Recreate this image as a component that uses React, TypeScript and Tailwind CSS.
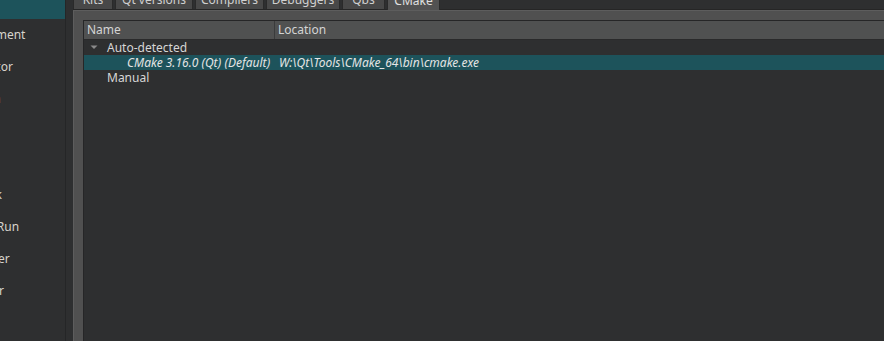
import React from "react";

const sideItems = [
  "Kits",
  "Environment",
  "Text Editor",
  "FakeVim",
  "Help",
  "C++",
  "Qt Quick",
  "Build & Run",
  "Debugger",
  "Designer",
];

const tabs = [
  { label: "Kits", w: "w-[40px]" },
  { label: "Qt versions", w: "w-[78px]" },
  { label: "Compilers", w: "w-[69px]" },
  { label: "Debuggers", w: "w-[74px]" },
  { label: "Qbs", w: "w-[43px]" },
];

export default function App() {
  return (
    <div className="w-[884px] h-[341px] overflow-hidden bg-[#2e2f30] flex font-['Noto_Sans',_'DejaVu_Sans',_sans-serif] text-[12px] text-[#d6d6d6]">
      {/* Sidebar */}
      <div className="w-[65px] shrink-0 overflow-hidden flex flex-col -mt-[13px]">
        {sideItems.map((s, i) => (
          <div
            key={s}
            className={`h-[32px] shrink-0 flex items-center overflow-hidden ${
              i === 0 ? "bg-[#1d535b]" : ""
            }`}
          >
            <span className="-ml-[47px] whitespace-nowrap text-[#d8d4cc]">{s}</span>
          </div>
        ))}
      </div>
      <div className="w-px shrink-0 bg-[#252627]" />
      {/* Right area */}
      <div className="flex-1 min-w-0 flex flex-col pl-[7px]">
        {/* Tab bar */}
        <div className="h-[9px] shrink-0 flex items-end gap-[2px] overflow-visible">
          {tabs.map((t) => (
            <div
              key={t.label}
              className={`${t.w} h-[22px] -mt-[13px] shrink-0 bg-[#484848] border border-b-0 border-[#2a2a2a] flex items-center justify-center pt-[2px] whitespace-nowrap text-[#d0d0d0]`}
            >
              {t.label}
            </div>
          ))}
          <div className="w-[53px] h-[23px] -mt-[13px] -mb-px shrink-0 bg-[#525252] border border-b-0 border-[#2a2a2a] flex items-center justify-center pt-[3px] relative z-10 text-[#e0e0e0]">
            CMake
          </div>
        </div>
        {/* Pane */}
        <div className="flex-1 flex flex-col bg-[#505050] border-t border-[#262626] shadow-[inset_1px_1px_0_#5d5d5d] pl-[10px] pt-[10px]">
          <div className="flex-1 flex flex-col bg-[#2e2f30] border-t border-l border-[#262627]">
            {/* Header */}
            <div className="h-[19px] shrink-0 flex bg-[#505151] border-b border-[#2a2a2b] text-[#d4d4d4]">
              <div className="w-[191px] shrink-0 border-r border-[#3a3b3c] pl-[3px] flex items-center">
                Name
              </div>
              <div className="pl-[3px] flex items-center">Location</div>
            </div>
            {/* Rows */}
            <div className="h-[15px] flex items-center">
              <div className="w-[191px] shrink-0 flex items-center">
                <svg width="20" height="15" viewBox="0 0 20 15" className="shrink-0">
                  <path d="M6.5 5.5 L13.5 5.5 L10 9 Z" fill="#8a8a8a" />
                </svg>
                <span className="ml-[3px] whitespace-nowrap">Auto-detected</span>
              </div>
            </div>
            <div className="h-[15px] flex items-center bg-[#1d535b] italic text-[#e4e4e4]">
              <div className="w-[192px] shrink-0 pl-[43px] whitespace-nowrap overflow-hidden">
                CMake 3.16.0 (Qt) (Default)
              </div>
              <div className="pl-[3px] whitespace-nowrap">W:\Qt\Tools\CMake_64\bin\cmake.exe</div>
            </div>
            <div className="h-[15px] flex items-center">
              <div className="pl-[23px] whitespace-nowrap">Manual</div>
            </div>
          </div>
        </div>
      </div>
    </div>
  );
}
